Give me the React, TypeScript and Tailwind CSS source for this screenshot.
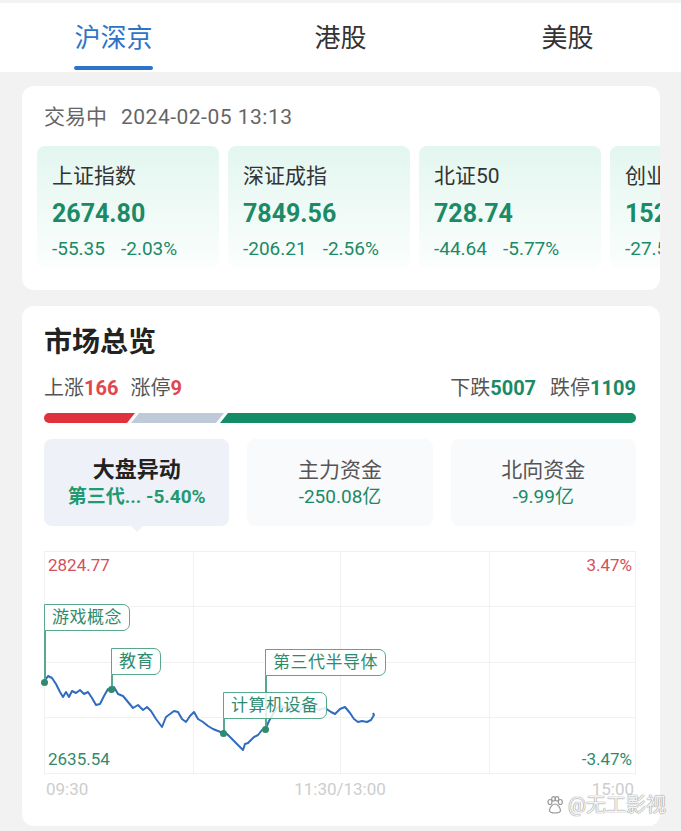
import React from "react";

const indices = [
  { name: "上证指数", value: "2674.80", chg: "-55.35", pct: "-2.03%" },
  { name: "深证成指", value: "7849.56", chg: "-206.21", pct: "-2.56%" },
  { name: "北证50", value: "728.74", chg: "-44.64", pct: "-5.77%" },
  { name: "创业板指", value: "1527.30", chg: "-27.51", pct: "-1.77%" },
];

const curve: [number, number][] = [
  [0, 131], [4, 125], [8, 127], [12, 133], [16, 141], [19, 146], [22, 141], [25, 146], [28, 140],
  [32, 142], [36, 139], [40, 143], [44, 141], [48, 147], [52, 154], [56, 153], [60, 145],
  [64, 138], [67, 140], [70, 136], [74, 143], [79, 145], [84, 151], [89, 157], [94, 154],
  [99, 159], [103, 156], [107, 160], [112, 168], [118, 176], [122, 166], [126, 163],
  [130, 160], [134, 161], [138, 168], [142, 171], [146, 165], [150, 161], [154, 168],
  [159, 171], [164, 175], [169, 178], [174, 180], [179, 182], [183, 183], [187, 187],
  [191, 191], [195, 195], [199, 199], [201, 193], [204, 192], [207, 189], [210, 186],
  [214, 184], [218, 179], [222, 177], [225, 170], [229, 163], [233, 157], [237, 155],
  [241, 157], [245, 156], [250, 158], [255, 160], [259, 156], [263, 154], [269, 157],
  [275, 159], [281, 157], [287, 161], [291, 163], [296, 158], [301, 156], [306, 162],
  [310, 168], [314, 171], [318, 170], [323, 171], [327, 169], [330, 164], [329, 162],
];

function Callout({ label, x, y, w, line }: { label: string; x: number; y: number; w: number; line: number }) {
  return (
    <>
      <div
        className="absolute w-[1.5px] bg-[#58a98b]"
        style={{ left: x, top: y + 27, height: line }}
      />
      <div
        className="absolute flex h-[27px] items-center rounded-r-[7px] border-[1.5px] border-[#58a98b] bg-white/85 pl-[7px] text-[17px] leading-none tracking-[0.5px] text-[#2f8b6d]"
        style={{ left: x, top: y, width: w }}
      >
        {label}
      </div>
      <div
        className="absolute h-[7px] w-[7px] rounded-full bg-[#2f8b6d]"
        style={{ left: x - 3, top: y + 27 + line - 3 }}
      />
    </>
  );
}

export default function App() {
  const pts = curve.map(([x, y]) => `${x},${y}`).join(" ");
  return (
    <div className="relative min-h-[831px] bg-[#f2f2f2] font-[Roboto,'Noto_Sans_CJK_SC',sans-serif] text-[#333]">
      {/* tabs */}
      <div className="border-t-[3px] border-[#f3f3f3] bg-white">
        <div className="grid h-[69px] grid-cols-3">
          <div className="flex flex-col items-center pt-[20px]">
            <span className="text-[26px] leading-[30px] text-[#2d74c9]">沪深京</span>
            <div className="mt-[13px] h-[4px] w-[79px] rounded-full bg-[#2d74c9]" />
          </div>
          <div className="flex justify-center pt-[20px]">
            <span className="text-[26px] leading-[30px] text-[#333]">港股</span>
          </div>
          <div className="flex justify-center pt-[20px]">
            <span className="text-[26px] leading-[30px] text-[#333]">美股</span>
          </div>
        </div>
      </div>

      {/* index card */}
      <div className="ml-[22px] mr-[21px] mt-[14px] overflow-hidden rounded-[12px] bg-white pb-[22px] pt-[18px]">
        <div className="pl-[22px] text-[21px] leading-[26px] text-[#666]">
          交易中<span className="ml-[14px] tracking-[0.5px]">2024-02-05 13:13</span>
        </div>
        <div className="mt-[16px] flex gap-[9px] pl-[15px]">
          {indices.map((it) => (
            <div
              key={it.name}
              className="h-[122px] w-[182px] shrink-0 rounded-[8px] bg-linear-to-b from-[#e3f6ef] to-[#fbfefd] pl-[15px] pt-[17px]"
            >
              <div className="text-[21px] leading-[26px] text-[#333]">{it.name}</div>
              <div className="mt-[10px] text-[25px] font-bold leading-[30px] text-[#1b8a66]">{it.value}</div>
              <div className="mt-[9px] flex gap-[16px] text-[19px] leading-[22px] text-[#1b8a66]">
                <span>{it.chg}</span>
                <span>{it.pct}</span>
              </div>
            </div>
          ))}
        </div>
      </div>

      {/* market overview */}
      <div className="ml-[22px] mr-[21px] mt-[16px] rounded-[12px] bg-white pb-[26px] pl-[22px] pr-[24px] pt-[20px]">
        <div className="text-[28px] font-bold leading-[34px] text-[#222]">市场总览</div>
        <div className="mt-[16px] flex justify-between text-[20px] leading-[24px] text-[#555]">
          <div>
            上涨<span className="font-bold text-[#e0474f]">166</span>
            <span className="ml-[12px]">涨停</span>
            <span className="font-bold text-[#e0474f]">9</span>
          </div>
          <div>
            下跌<span className="font-bold text-[#1b8a66]">5007</span>
            <span className="ml-[14px]">跌停</span>
            <span className="font-bold text-[#1b8a66]">1109</span>
          </div>
        </div>
        <div className="mt-[13px] flex h-[10px]">
          <div className="w-[91px] rounded-l-full bg-[#e0323c] [clip-path:polygon(0_0,100%_0,calc(100%-8px)_100%,0_100%)]" />
          <div className="-ml-[4px] w-[93px] bg-[#bfcad9] [clip-path:polygon(8px_0,100%_0,calc(100%-8px)_100%,0_100%)]" />
          <div className="-ml-[4px] flex-1 rounded-r-full bg-[#148c66] [clip-path:polygon(8px_0,100%_0,100%_100%,0_100%)]" />
        </div>

        <div className="mt-[16px] grid grid-cols-3 gap-[18px]">
          <div className="relative flex h-[87px] flex-col items-center justify-center rounded-[8px] bg-[#eef1f7]">
            <div className="text-[22px] font-bold leading-[28px] text-[#222]">大盘异动</div>
            <div className="mt-[1px] text-[19px] font-bold leading-[24px] text-[#1f9a72]">第三代... -5.40%</div>
            <div className="absolute -bottom-[6px] left-1/2 h-0 w-0 -translate-x-1/2 border-x-[6px] border-t-[6px] border-x-transparent border-t-[#eef1f7]" />
          </div>
          <div className="flex h-[87px] flex-col items-center justify-center rounded-[8px] bg-[#f8fafc]">
            <div className="text-[21px] leading-[28px] text-[#555]">主力资金</div>
            <div className="mt-[1px] text-[19px] leading-[24px] text-[#1b8a66]">-250.08亿</div>
          </div>
          <div className="flex h-[87px] flex-col items-center justify-center rounded-[8px] bg-[#f8fafc]">
            <div className="text-[21px] leading-[28px] text-[#555]">北向资金</div>
            <div className="mt-[1px] text-[19px] leading-[24px] text-[#1b8a66]">-9.99亿</div>
          </div>
        </div>

        {/* chart */}
        <div className="relative mt-[25px] h-[223px]">
          <svg className="absolute inset-0" width="592" height="223" viewBox="0 0 592 223">
            <g stroke="#f1f1f1" strokeWidth="1" fill="none">
              <rect x="0.5" y="0.5" width="591" height="222" />
              <line x1="0" y1="55.5" x2="592" y2="55.5" />
              <line x1="0" y1="111.5" x2="592" y2="111.5" />
              <line x1="0" y1="166.5" x2="592" y2="166.5" />
              <line x1="149.5" y1="0" x2="149.5" y2="223" />
              <line x1="296.5" y1="0" x2="296.5" y2="223" />
              <line x1="445.5" y1="0" x2="445.5" y2="223" />
            </g>
            <polyline points={pts} fill="none" stroke="#2f6cc0" strokeWidth="2" strokeLinejoin="round" />
          </svg>
          <div className="absolute left-[4px] top-[3px] text-[17px] leading-[22px] text-[#d4505a]">2824.77</div>
          <div className="absolute right-[4px] top-[3px] text-[17px] leading-[22px] text-[#d4505a]">3.47%</div>
          <div className="absolute bottom-[4px] left-[4px] text-[17px] leading-[22px] text-[#2f8b6d]">2635.54</div>
          <div className="absolute bottom-[4px] right-[4px] text-[17px] leading-[22px] text-[#2f8b6d]">-3.47%</div>
          <Callout label="游戏概念" x={0} y={53} w={86} line={51} />
          <Callout label="教育" x={67} y={97} w={50} line={14} />
          <Callout label="第三代半导体" x={221} y={98} w={121} line={53} />
          <Callout label="计算机设备" x={179} y={141} w={104} line={14} />
        </div>
        <div className="relative mt-[4px] h-[22px] text-[17px] leading-[22px] text-[#cdcdcd]">
          <span className="absolute left-[2px]">09:30</span>
          <span className="absolute left-1/2 -translate-x-1/2">11:30/13:00</span>
          <span className="absolute right-[2px]">15:00</span>
        </div>
      </div>

      {/* watermark */}
      <div className="absolute left-[546px] top-[793px] flex items-center gap-[4px] text-[20px] leading-[24px] text-[#f4f4f4] [text-shadow:0_0_1px_#888,0_0_1px_#888]">
        <svg width="18" height="18" viewBox="0 0 18 18" fill="none" stroke="#999" strokeWidth="1.2">
          <ellipse cx="4" cy="6" rx="2" ry="2.5" />
          <ellipse cx="7.5" cy="2.8" rx="1.8" ry="2.2" />
          <ellipse cx="11" cy="2.8" rx="1.8" ry="2.2" />
          <ellipse cx="14.3" cy="6" rx="2" ry="2.5" />
          <path d="M9 8c-3 0-5.5 4-5.5 6.5 0 2 2 2.5 5.5 2.5s5.5-.5 5.5-2.5C14.5 12 12 8 9 8z" />
        </svg>
        <span>@无工影视</span>
      </div>
    </div>
  );
}
